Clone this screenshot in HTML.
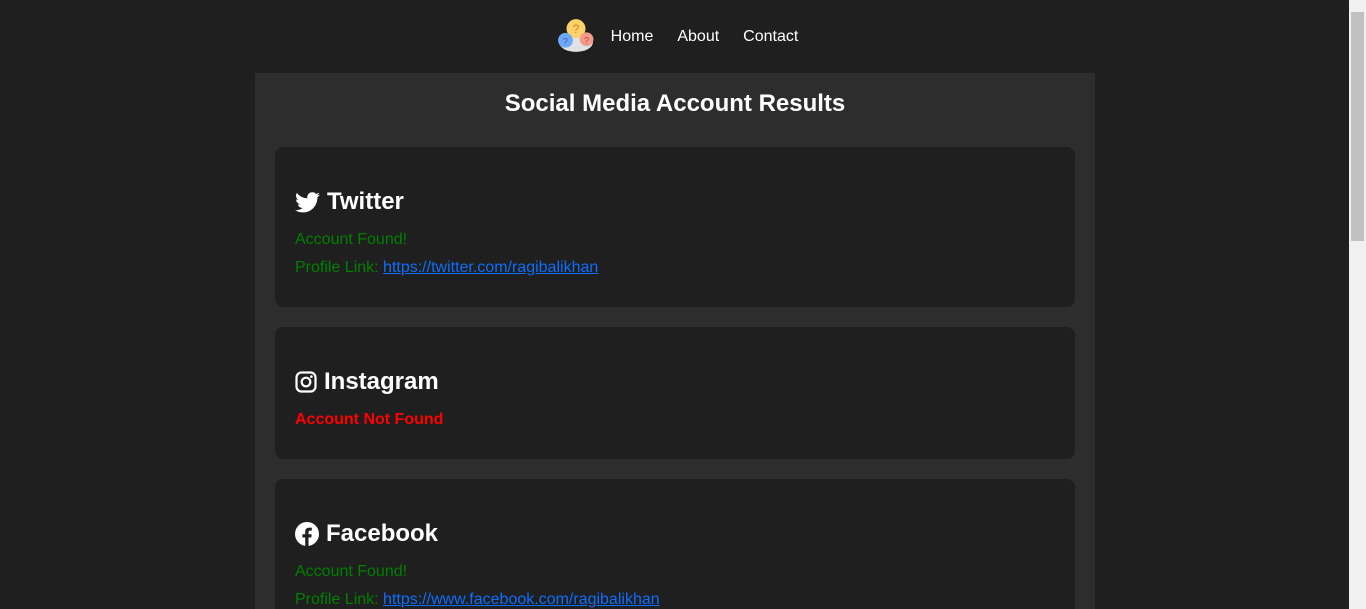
<!DOCTYPE html>
<html><head><meta charset="utf-8"><style>
*{box-sizing:border-box}
html,body{margin:0;padding:0;height:609px;overflow:hidden}
body{background:#1f1f1f;font-family:"Liberation Sans",Arial,sans-serif;color:#fff;position:relative}
.nav{height:73px;display:flex;justify-content:center;align-items:center;padding-left:1px}
.nav a{color:#fff;text-decoration:none;font-size:16px;margin:0 12px}
.logo{width:38px;height:36px;margin-right:4px;margin-top:-4px}
.wrap{position:absolute;left:255px;top:73px;width:840px;height:600px;background:#2d2d2d;padding:0 20px}
h1{margin:0;text-align:center;font-size:24px;line-height:28px;padding-top:17px;height:74px}
.card{background:#1f1f1f;border-radius:8px;padding:41px 20px 25px;margin-bottom:20px}
h2{margin:0 0 10px;font-size:24px;line-height:28px;display:flex;align-items:center}
h2 svg{margin-right:7px}
p{margin:0;line-height:28px;font-size:16px;color:#008000}
p a{color:#0d6efd}
.nf{color:#ff0000;font-weight:bold}
.sb{position:absolute;right:0;top:0;width:17px;height:609px;background:#f1f1f1}
.sb div{position:absolute;left:2px;top:12px;width:13px;height:229px;background:#c1c1c1}
</style></head><body>
<div class="nav">
<svg class="logo" viewBox="0 0 36 34"><ellipse cx="18" cy="24" rx="16" ry="9" fill="#dfe3e8"/><circle cx="18" cy="11" r="9" fill="#fcd36a"/><text x="18" y="15" font-size="11" text-anchor="middle" fill="#e07b2b" font-family="Liberation Sans">?</text><circle cx="8" cy="22" r="7" fill="#6ea8f5"/><text x="8" y="26" font-size="9" text-anchor="middle" fill="#3a5bd9" font-family="Liberation Sans">?</text><circle cx="28" cy="21" r="6.5" fill="#f19c8a"/><text x="28" y="25" font-size="9" text-anchor="middle" fill="#d9413a" font-family="Liberation Sans">?</text></svg>
<a>Home</a><a>About</a><a>Contact</a>
</div>
<div class="wrap">
<h1>Social Media Account Results</h1>
<div class="card"><h2><svg width="25" height="21" viewBox="0 0 24 20"><path fill="#fff" d="M24 2.4a10 10 0 0 1-2.8.8A5 5 0 0 0 23.3.5a10 10 0 0 1-3.1 1.2A4.9 4.9 0 0 0 11.8 6 14 14 0 0 1 1.7.9a4.9 4.9 0 0 0 1.5 6.6A4.9 4.9 0 0 1 1 6.9a4.9 4.9 0 0 0 3.9 4.9 5 5 0 0 1-2.2.1 4.9 4.9 0 0 0 4.600 3.4A9.9 9.9 0 0 1 0 17.3 14 14 0 0 0 7.5 19.5c9 0 14-7.5 14-14v-.6A10 10 0 0 0 24 2.4z"/></svg>Twitter</h2>
<p>Account Found!</p><p>Profile Link: <a href="#">https://twitter.com/ragibalikhan</a></p></div>
<div class="card"><h2><svg width="22" height="22" viewBox="0 0 22 22"><rect x="1.5" y="1.5" width="19" height="19" rx="5" fill="none" stroke="#fff" stroke-width="2.2"/><circle cx="11" cy="11" r="4.3" fill="none" stroke="#fff" stroke-width="2.2"/><circle cx="16.4" cy="5.6" r="1.3" fill="#fff"/></svg>Instagram</h2>
<p class="nf">Account Not Found</p></div>
<div class="card"><h2><svg width="24" height="24" viewBox="0 0 24 24"><circle cx="12" cy="12" r="12" fill="#fff"/><path fill="#1f1f1f" d="M13.5 24v-8.5h2.8l.4-3.3h-3.2v-2c0-.9.3-1.6 1.6-1.6h1.7V5.7c-.3 0-1.3-.1-2.5-.1-2.5 0-4.100 1.5-4.100 4.2v2.4H7.4v3.3h2.8V24z"/></svg>Facebook</h2>
<p>Account Found!</p><p>Profile Link: <a href="#">https://www.facebook.com/ragibalikhan</a></p></div>
</div>
<div class="sb"><div></div></div>
</body></html>
